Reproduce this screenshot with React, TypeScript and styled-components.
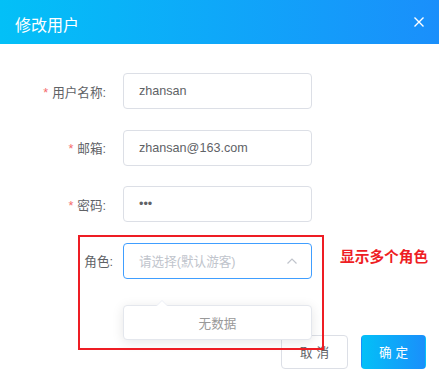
import React from "react";
import styled, {createGlobalStyle} from "styled-components";

const GlobalStyle = createGlobalStyle`
  html, body {
    margin: 0;
    padding: 0;
    background: #fff;
  }
  body {
    font-family: "Liberation Sans", "Noto Sans CJK SC", sans-serif;
  }
`;

const brandGradient = "linear-gradient(90deg, #03c0f7 0%, #1a8ffb 100%)";

const Dialog = styled.div`
  position: relative;
  width: 439px;
  height: 378px;
  background: #fff;
  overflow: hidden;
`;

const Header = styled.div`
  height: 44px;
  display: flex;
  align-items: center;
  justify-content: space-between;
  padding: 0 14px 0 15px;
  background: ${brandGradient};
  color: #fff;
  box-sizing: border-box;
`;

const Title = styled.span`
  font-size: 16px;
  line-height: 20px;
  padding-top: 8px;
`;

const Close = styled.span`
  display: flex;
  width: 12px;
  height: 12px;
  margin-top: 0;
`;

const Form = styled.div`
  padding-top: 29px;
  display: flex;
  flex-direction: column;
  gap: 20.67px;
`;

const Row = styled.div`
  display: flex;
  align-items: center;
  height: 36px;
`;

const Label = styled.label<{ $gap?: number }>`
  width: 123px;
  box-sizing: border-box;
  padding-right: ${p => p.$gap ?? 17}px;
  text-align: right;
  font-size: 12.6px;
  color: #606266;
`;

const Star = styled.span`
  color: #f56c6c;
  margin-right: 4px;
`;

const Field = styled.div<{ $focus?: boolean }>`
  position: relative;
  width: 189px;
  height: 36px;
  box-sizing: border-box;
  border: 1px solid ${p => (p.$focus ? "#409eff" : "#dcdfe6")};
  border-radius: 4px;
  display: flex;
  align-items: center;
  justify-content: space-between;
  padding: 0 13px 0 15px;
  font-size: 12.6px;
  color: ${p => (p.$focus ? "#c0c4cc" : "#606266")};
`;

const Dropdown = styled.div`
  position: absolute;
  left: -1px;
  top: 61px;
  width: 189px;
  height: 35px;
  box-sizing: border-box;
  background: #fff;
  border: 1px solid #e4e7ed;
  border-radius: 4px;
  box-shadow: 0 2px 12px rgba(0, 0, 0, 0.1);
  display: flex;
  align-items: center;
  justify-content: center;
  font-size: 12.6px;
  color: #999;
  z-index: 2;

  &::before {
    content: "";
    position: absolute;
    top: -6px;
    left: 32px;
    width: 0;
    height: 0;
    border-left: 6px solid transparent;
    border-right: 6px solid transparent;
    border-bottom: 6px solid #ebeef5;
  }
  &::after {
    content: "";
    position: absolute;
    top: -5px;
    left: 33px;
    width: 0;
    height: 0;
    border-left: 5px solid transparent;
    border-right: 5px solid transparent;
    border-bottom: 5px solid #fff;
  }
`;

const Footer = styled.div`
  display: flex;
  justify-content: flex-end;
  gap: 13px;
  padding: 56px 13px 0 0;
`;

const Button = styled.button<{ $primary?: boolean }>`
  height: 34px;
  width: ${p => (p.$primary ? "65px" : "67px")};
  border-radius: 4px;
  font-family: inherit;
  font-size: 12.6px;
  letter-spacing: 4px;
  text-indent: 4px;
  border: 1px solid ${p => (p.$primary ? "transparent" : "#dcdfe6")};
  background: ${p => (p.$primary ? brandGradient : "#fff")};
  color: ${p => (p.$primary ? "#fff" : "#606266")};
  padding: 0;
`;

const Annotation = styled.div`
  position: absolute;
  left: 78px;
  top: 235px;
  width: 246px;
  height: 115px;
  box-sizing: border-box;
  border: 2px solid #ee1d24;
  z-index: 3;
`;

const Note = styled.div`
  position: absolute;
  left: 340px;
  top: 245px;
  font-size: 14.7px;
  font-weight: bold;
  color: #ee1d24;
  font-family: "Noto Sans CJK SC", sans-serif;
`;

function App() {
    return (
        <Dialog>
            <GlobalStyle/>
            <Header>
                <Title>修改用户</Title>
                <Close>
                    <svg width="12" height="12" viewBox="0 0 12 12">
                        <path d="M1.5 1.5 L10.5 10.5 M10.5 1.5 L1.5 10.5" stroke="#fff" strokeWidth="1.4"/>
                    </svg>
                </Close>
            </Header>
            <Form>
                <Row>
                    <Label><Star>*</Star>用户名称:</Label>
                    <Field>zhansan</Field>
                </Row>
                <Row>
                    <Label><Star>*</Star>邮箱:</Label>
                    <Field>zhansan@163.com</Field>
                </Row>
                <Row>
                    <Label><Star>*</Star>密码:</Label>
                    <Field>•••</Field>
                </Row>
                <Row>
                    <Label $gap={10}>角色:</Label>
                    <Field $focus>
                        请选择(默认游客)
                        <svg width="12" height="8" viewBox="0 0 12 8">
                            <path d="M1.5 6.5 L6 2 L10.5 6.5" stroke="#c0c4cc" strokeWidth="1.2" fill="none"/>
                        </svg>
                        <Dropdown>无数据</Dropdown>
                    </Field>
                </Row>
            </Form>
            <Footer>
                <Button>取消</Button>
                <Button $primary>确定</Button>
            </Footer>
            <Annotation/>
            <Note>显示多个角色</Note>
        </Dialog>
    );
}

export default App;
